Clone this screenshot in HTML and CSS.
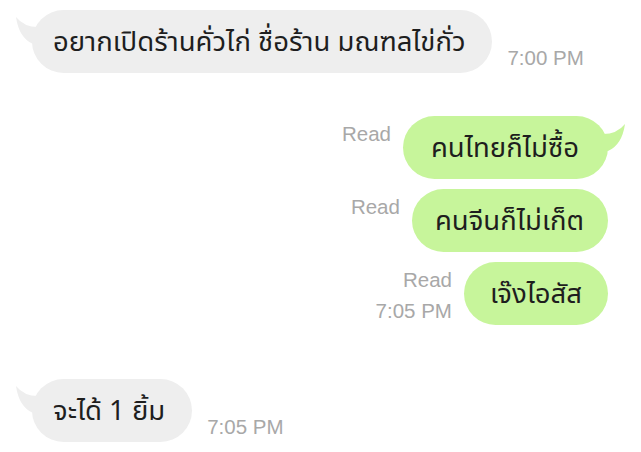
FILE: index.html
```html
<!DOCTYPE html>
<html lang="th">
<head>
<meta charset="utf-8">
<link rel="stylesheet" href="styles.css">
</head>
<body>
<div class="chat">
  <div class="row left first">
    <div class="bubble gray">
      <svg class="tail tail-l" viewBox="0 0 24 30" width="24" height="30"><path d="M0 1 Q8 11 22 11 L24 28 L17 28 Q3 22 0 1 Z"/></svg>
      อยากเปิดร้านคั่วไก่ ชื่อร้าน มณฑลไข่กั่ว
    </div>
    <div class="meta bottom"><span>7:00 PM</span></div>
  </div>

  <div class="row right gap-big">
    <div class="meta top"><span>Read</span></div>
    <div class="bubble green wide">
      <svg class="tail tail-r" viewBox="0 0 24 30" width="24" height="30"><path d="M24 1 Q16 11 2 11 L0 28 L7 28 Q21 22 24 1 Z"/></svg>
      คนไทยก็ไม่ซื้อ
    </div>
  </div>

  <div class="row right gap-small">
    <div class="meta top"><span>Read</span></div>
    <div class="bubble green">คนจีนก็ไม่เก็ต</div>
  </div>

  <div class="row right gap-small">
    <div class="meta top"><span>Read</span><span>7:05 PM</span></div>
    <div class="bubble green short">เจ๊งไอสัส</div>
  </div>

  <div class="row left gap-huge">
    <div class="bubble gray">
      <svg class="tail tail-l" viewBox="0 0 24 30" width="24" height="30"><path d="M0 1 Q8 11 22 11 L24 28 L17 28 Q3 22 0 1 Z"/></svg>
      จะได้ 1 ยิ้ม
    </div>
    <div class="meta bottom"><span>7:05 PM</span></div>
  </div>
</div>
</body>
</html>
```

FILE: styles.css
```css
html, body {
  margin: 0;
  padding: 0;
  background: #ffffff;
}
.chat {
  display: flex;
  flex-direction: column;
  padding: 10px 33px 0 32px;
}
.row {
  display: flex;
  align-items: stretch;
  gap: 15px;
}
.row.left { justify-content: flex-start; }
.row.right { justify-content: flex-end; gap: 12px; }
.gap-big { margin-top: 43px; }
.gap-small { margin-top: 10px; }
.gap-huge { margin-top: 53px; }
.bubble {
  position: relative;
  height: 63px;
  display: flex;
  align-items: center;
  border-radius: 32px;
  font-family: Tahoma, "Leelawadee UI", "Noto Sans Thai", "DejaVu Sans", sans-serif;
  font-size: 27.5px;
  color: #1e1e1e;
  white-space: nowrap;
  box-sizing: border-box;
  padding-top: 2px;
}
.bubble.gray { background: #eeeeee; padding-left: 21px; padding-right: 27px; }
.bubble.green { background: #c7f59b; padding-left: 23px; padding-right: 24px; }
.bubble.green.wide { padding-left: 28px; padding-right: 29px; }
.bubble.green.short { padding-left: 26px; padding-right: 26px; }
.tail {
  position: absolute;
  top: 6px;
}
.tail-l { left: -16px; fill: #eeeeee; }
.tail-r { right: -17px; fill: #c7f59b; top: 7px; }
.meta {
  display: flex;
  flex-direction: column;
  align-items: flex-end;
  font-family: "Liberation Sans", Arial, sans-serif;
  font-size: 20.5px;
  line-height: 31px;
  color: #a8a8a8;
}
.meta.bottom { justify-content: flex-end; }
.meta.top { justify-content: flex-start; padding-top: 2px; }
```
